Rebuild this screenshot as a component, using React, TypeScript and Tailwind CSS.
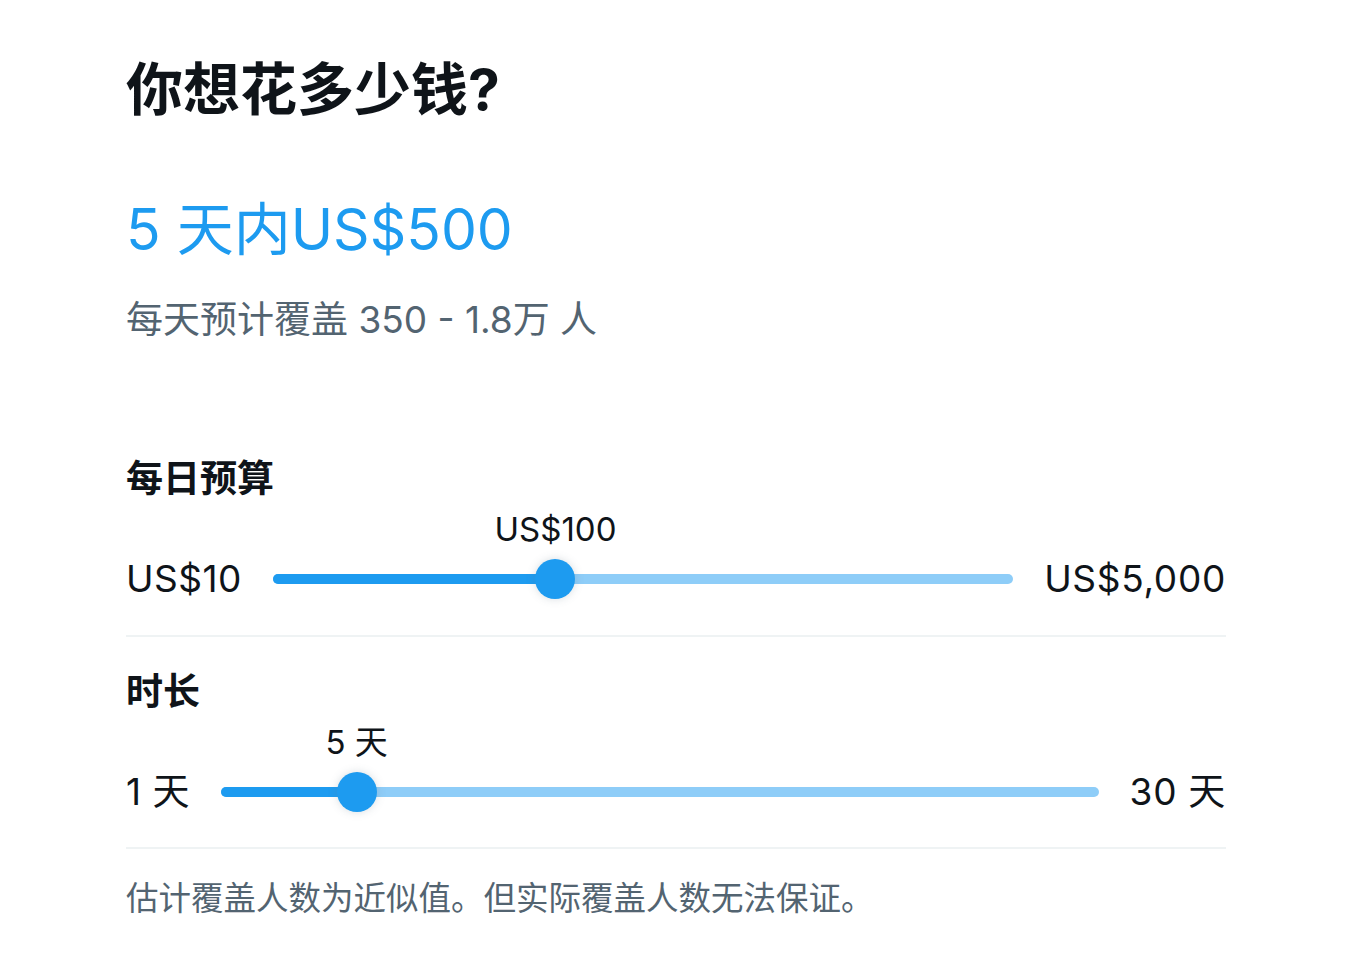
import React from 'react';

interface SliderProps {
  min: string;
  max: string;
  value: string;
  pct: number;
}

const BudgetSlider: React.FC<SliderProps> = ({ min, max, value, pct }) => {
  // thumb travels between track start + radius and track end - radius
  const left = `calc(20px + (100% - 40px) * ${pct})`;
  return (
    <div className="mt-[56px] flex items-center gap-[31px] h-[44px]">
      <span className="text-[37px] leading-[44px] tracking-[0.5px] text-[#0f1419] whitespace-nowrap">{min}</span>
      <div className="relative flex-1 h-[44px] flex items-center">
        <div className="w-full h-[10px] rounded-full bg-[#8ecdf8] overflow-hidden">
          <div className="h-full bg-[#1d9bf0]" style={{ width: left }} />
        </div>
        <div
          className="absolute top-1/2 w-[40px] h-[40px] -ml-[20px] -mt-[20px] rounded-full bg-[#1d9bf0] shadow-[0_0_8px_rgba(101,119,134,0.25)]"
          style={{ left }}
        />
        <span
          className="absolute bottom-[52px] -translate-x-1/2 text-[33px] leading-[40px] text-[#0f1419] whitespace-nowrap"
          style={{ left }}
        >
          {value}
        </span>
      </div>
      <span className="text-[37px] leading-[44px] tracking-[0.7px] text-[#0f1419] whitespace-nowrap">{max}</span>
    </div>
  );
};

const App: React.FC = () => {
  return (
    <div
      className="min-h-[970px] bg-white"
      style={{ fontFamily: 'Inter, "Noto Sans CJK SC", sans-serif' }}
    >
      <div className="w-[1100px] ml-[126px] pt-[56px]">
        <h1 className="text-[57px] leading-[68px] font-bold text-[#0f1419]">你想花多少钱?</h1>
        <div className="mt-[72px] text-[57px] leading-[68px] text-[#1d9bf0]">5 天内US$500</div>
        <p className="mt-[34px] text-[37px] leading-[44px] text-[#536471]">每天预计覆盖 350 - 1.8万 人</p>

        {/* Daily budget */}
        <div className="mt-[115px] pb-[34px] border-b-2 border-[#eff3f4]">
          <h2 className="text-[37px] leading-[44px] font-bold text-[#0f1419]">每日预算</h2>
          <BudgetSlider min="US$10" max="US$5,000" value="US$100" pct={0.375} />
        </div>

        {/* Duration */}
        <div className="pt-[33px] pb-[33px] border-b-2 border-[#eff3f4]">
          <h2 className="text-[37px] leading-[44px] font-bold text-[#0f1419]">时长</h2>
          <BudgetSlider min="1 天" max="30 天" value="5 天" pct={0.138} />
        </div>

        <p className="mt-[30px] text-[32.5px] leading-[40px] text-[#536471]">
          估计覆盖人数为近似值。但实际覆盖人数无法保证。
        </p>
      </div>
    </div>
  );
};

export default App;
